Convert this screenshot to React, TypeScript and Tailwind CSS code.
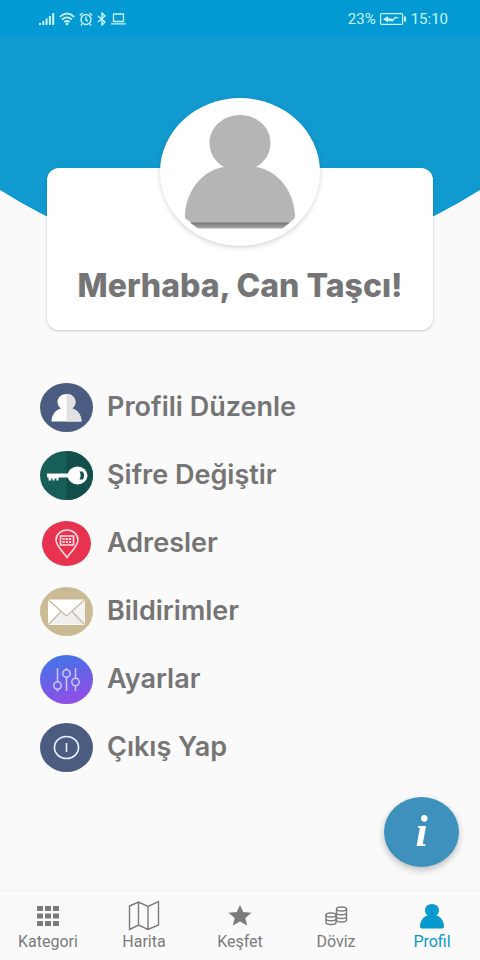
import type { ReactNode } from 'react';

function StatusBar() {
  return (
    <div className="relative flex h-[37px] items-center justify-between bg-[#039ad3] pl-[39px] pr-8 text-[#c9f4ff]">
      <div className="flex items-center gap-1">
        <svg width="16" height="14" viewBox="0 0 16 14" fill="currentColor">
          <path d="M0 11h2v2H0zM3.3 9h2v4h-2zM6.6 6.5h2V13h-2zM9.9 4h2v9h-2zM13.2 1h2v12h-2z" />
        </svg>
        <svg width="16" height="14" viewBox="0 0 16 14" fill="none" stroke="currentColor" strokeWidth="1.7">
          <path d="M.7 4.8Q8-1.8 15.3 4.8M3 7.5q5-4.4 10 0M5.3 10q2.7-2.2 5.4 0" />
          <circle cx="8" cy="12" r=".6" fill="currentColor" />
        </svg>
        <svg width="14" height="14" viewBox="0 0 14 14" fill="none" stroke="currentColor" strokeWidth="1.4">
          <circle cx="7" cy="7.5" r="5" />
          <path d="M7 4.5v3.500l2 1M.8 3.600 3.600 1M10.400 1l2.800 2.600M3 12l-1 1.500M11 12l1 1.500" />
        </svg>
        <svg width="10" height="14" viewBox="0 0 10 14" fill="none" stroke="currentColor" strokeWidth="1.4">
          <path d="M1 4l7 6-3 3V1l3 3-7 6" />
        </svg>
        <svg width="15" height="14" viewBox="0 0 15 14" fill="none" stroke="currentColor" strokeWidth="1.3">
          <path d="M2.500 2h10v7.500h-10zM0 11.800h15" />
        </svg>
      </div>
      <div className="flex items-center gap-1 font-['Roboto',sans-serif] text-[15px] leading-5">
        <span>23%</span>
        <svg width="27" height="12" viewBox="0 0 27 12" fill="none">
          <rect x=".6" y=".6" width="22" height="10.8" rx="1" stroke="currentColor" strokeWidth="1.2" />
          <path d="M3 6l5-3v2l5 1 2-2.500 5 1.500-5 .500-2 3-5-.500v1.500z" fill="currentColor" />
          <path d="M25 3.500v5" stroke="currentColor" strokeWidth="2" />
        </svg>
        <span>15:10</span>
      </div>
    </div>
  );
}

function Avatar() {
  return (
    <div className="flex h-[148px] w-40 justify-center rounded-[50%] bg-white shadow-[0_2px_5px_rgba(0,0,0,0.16)]">
      <svg width="160" height="148" viewBox="0 0 160 148">
        <defs>
          <linearGradient id="avatar-base" x1="0" y1="0" x2="0" y2="1">
            <stop stopColor="#777" />
            <stop offset="1" stopColor="#a8a8a8" />
          </linearGradient>
        </defs>
        <path
          d="M80 17c17 0 30.500 12.500 30.500 28 0 10-5.500 19-14.500 24 22 3.500 38 24 39 48v3l-12 10H38l-13-10v-3c1-24 17-44.500 39-48-9-5-14.500-14-14.500-24C49.500 29.500 63 17 80 17z"
          fill="#b5b5b5"
        />
        <path d="M30 124.500H130l-8 6H38z" fill="url(#avatar-base)" />
      </svg>
    </div>
  );
}

const menuItems: { label: string; icon: ReactNode }[] = [
  {
    label: 'Profili Düzenle',
    icon: (
      <>
        <ellipse cx="26.5" cy="24.5" rx="26.5" ry="24.5" fill="#4a5c80" />
        <path d="M26.500 11c5 0 9 3.500 9 8 0 3-1.500 5-3.500 6.500 5 .8 9.500 6.500 9.500 13h-30c0-6.500 4.500-12.200 9.500-13-2-1.500-3.500-3.500-3.500-6.500 0-4.500 4-8 9-8z" fill="#fff" />
        <path d="M26.500 11c5 0 9 3.500 9 8 0 3-1.500 5-3.500 6.500 5 .8 9.500 6.500 9.500 13h-15z" fill="#e1e1e1" />
      </>
    ),
  },
  {
    label: 'Şifre Değiştir',
    icon: (
      <>
        <ellipse cx="26.5" cy="24.5" rx="26.5" ry="24.5" fill="#175d58" />
        <path d="M26.500 0a26.500 24.500 0 0 1 0 49z" fill="#124e4a" />
        <ellipse cx="37.5" cy="24.5" rx="10" ry="9" fill="#fff" />
        <path d="M7 22.500h22v4H18.500v3h-2v-2h-2v2h-2v-2h-1.500v2H8.500v-3H7z" fill="#fff" />
        <path d="M39.500 20.500h3c2 1.500 2 6.500 0 8h-3c1.500-2.500 1.500-5.500 0-8z" fill="#124e4a" />
      </>
    ),
  },
  {
    label: 'Adresler',
    icon: (
      <>
        <ellipse cx="26.5" cy="24.5" rx="24.5" ry="22.5" fill="#e73350" />
        <g fill="none" stroke="#ffdce0" strokeWidth="1.6">
          <path d="M27 38.500C23 32.500 16 27 16 21c0-5.500 5-10 11-10s11 4.500 11 10c0 6-7 11.500-11 17.500z" />
          <path d="M20.500 17h13v9h-13z" />
          <path d="M22.500 20h9M22.500 23h9" strokeWidth="1.8" strokeDasharray="2.2 1" />
        </g>
      </>
    ),
  },
  {
    label: 'Bildirimler',
    icon: (
      <>
        <ellipse cx="26.5" cy="24.5" rx="26.5" ry="24.5" fill="#cbbb94" />
        <rect x="8" y="12.5" width="37" height="25.5" rx="1.5" fill="#fff" />
        <path d="M8.500 37.500 21 25l5.500 4 5.500-4 12.500 12.500z" fill="#efefef" />
        <path d="M32 25l13-12v24.500z" fill="#f3f3f3" />
        <path d="M8.500 13 26.500 29l18-16M8.500 37.500l12.500-13M44.500 37.500 32 24.500" fill="none" stroke="#c6ba9b" strokeWidth="1.3" />
      </>
    ),
  },
  {
    label: 'Ayarlar',
    icon: (
      <>
        <defs>
          <linearGradient id="settings" x1="0" y1="0" x2=".3" y2="1">
            <stop stopColor="#3978e8" />
            <stop offset="1" stopColor="#8d50e6" />
          </linearGradient>
        </defs>
        <ellipse cx="26.5" cy="24.5" rx="26.5" ry="24.5" fill="url(#settings)" />
        <g fill="none" stroke="#c9c8ff" strokeWidth="1.5">
          <path d="M17.500 13v14M17.500 34v2.500M26.500 13v2M26.500 22v14M35.500 13v10.500M35.500 30.500v5.500" />
          <circle cx="17.5" cy="30.5" r="3.7" />
          <circle cx="26.5" cy="18.5" r="3.7" />
          <circle cx="35.5" cy="27" r="3.7" />
        </g>
      </>
    ),
  },
  {
    label: 'Çıkış Yap',
    icon: (
      <>
        <ellipse cx="26.5" cy="24.5" rx="26.5" ry="24.5" fill="#4a5c80" />
        <ellipse cx="26.5" cy="24.5" rx="12" ry="11" fill="none" stroke="#e3f1ff" strokeWidth="1.7" />
        <path d="M26.500 20v9" stroke="#e3f1ff" strokeWidth="1.6" />
      </>
    ),
  },
];

const tabs: { label: string; icon: ReactNode; active?: boolean }[] = [
  {
    label: 'Kategori',
    icon: <path d="M5 6h6v5H5zM13 6h6v5h-6zM21 6h6v5h-6zM5 13.500h6v5H5zM13 13.500h6v5h-6zM21 13.500h6v5h-6zM5 21h6v5H5zM13 21h6v5h-6zM21 21h6v5h-6z" fill="currentColor" />,
  },
  {
    label: 'Harita',
    icon: <path d="M1.500 6 10.500 2l9.500 4.500L30.500 1.500V25L20 29.500l-9.500-4.500-9 4.500zM10.500 2v23M20 6.500v23" fill="none" stroke="currentColor" strokeWidth="1.4" />,
  },
  {
    label: 'Keşfet',
    icon: <path d="m16 5 3.200 7 8.300.8-6.200 5.200 1.900 7.500-7.200-4-7.200 4 1.900-7.500-6.200-5.200 8.300-.8z" fill="currentColor" />,
  },
  {
    label: 'Döviz',
    icon: (
      <g fill="none" stroke="currentColor" strokeWidth="1.4">
        <ellipse cx="21.5" cy="9" rx="5" ry="2" />
        <path d="M16.500 9v11c0 2.700 10 2.700 10 0V9M16.500 12.700c0 2.700 10 2.700 10 0M16.500 16.400c0 2.700 10 2.700 10 0" />
        <ellipse cx="11" cy="15" rx="5" ry="2" />
        <path d="M6 15v7.500c0 2.700 10 2.700 10 0V15M6 18.700c0 2.700 10 2.700 10 0" />
      </g>
    ),
  },
  {
    label: 'Profil',
    icon: <path d="M16 4c4 0 7 2.800 7 6.300 0 2.200-1 4-2.700 5.200 4 1 7.700 5 7.700 11 0 1.300-.7 2-2 2H6c-1.300 0-2-.7-2-2 0-6 3.700-10 7.700-11C10 14.300 9 12.500 9 10.300 9 6.800 12 4 16 4z" fill="currentColor" />,
    active: true,
  },
];

export default function App() {
  return (
    <div className="relative flex min-h-screen flex-col bg-[#fafafa] font-['Inter',sans-serif] text-[#757575]">
      {/* Curved header backdrop */}
      <svg className="absolute inset-x-0 top-0 h-[270px] w-full" viewBox="0 0 480 270" preserveAspectRatio="none">
        <path d="M0 0h480v190Q240 340 0 190z" fill="#109ad0" />
      </svg>

      <StatusBar />

      <main className="relative flex-1 pb-[70px]">
        <section className="mx-[47px] mt-[131px] flex h-[162px] flex-col items-center rounded-xl bg-white shadow-[0_1px_3px_rgba(0,0,0,0.2)]">
          <div className="-mt-[70px]">
            <Avatar />
          </div>
          <h1 className="mt-5 whitespace-nowrap text-[32px] font-extrabold leading-10">Merhaba, Can Taşcı!</h1>
        </section>

        <ul className="mx-10 mt-[43px]">
          {menuItems.map((item) => (
            <li key={item.label}>
              <button className="flex h-[68px] w-full items-center gap-[14px] text-left text-[27px] font-semibold leading-8">
                <svg width="53" height="49" viewBox="0 0 53 49">
                  {item.icon}
                </svg>
                {item.label}
              </button>
            </li>
          ))}
        </ul>
      </main>

      <button
        aria-label="Bilgi"
        className="fixed bottom-[93px] right-[21px] flex h-[70px] w-[75px] items-center justify-center rounded-[50%] bg-[#3e90bd] font-['Liberation_Serif',serif] text-[44px] font-bold italic leading-none text-white shadow-[0_3px_7px_rgba(0,0,0,0.25)]"
      >
        i
      </button>

      <nav className="fixed inset-x-0 bottom-0 flex h-[70px] border-t border-[#f0f0f0] bg-[#fafafa] font-['Roboto',sans-serif]">
        {tabs.map((tab) => (
          <a
            key={tab.label}
            href="#"
            className={`flex flex-1 flex-col items-center pt-[9px] text-base leading-5 ${tab.active ? 'text-[#0899cf]' : 'text-[#7b7b7b]'}`}
          >
            <svg width="32" height="32" viewBox="0 0 32 32">
              {tab.icon}
            </svg>
            {tab.label}
          </a>
        ))}
      </nav>
    </div>
  );
}
